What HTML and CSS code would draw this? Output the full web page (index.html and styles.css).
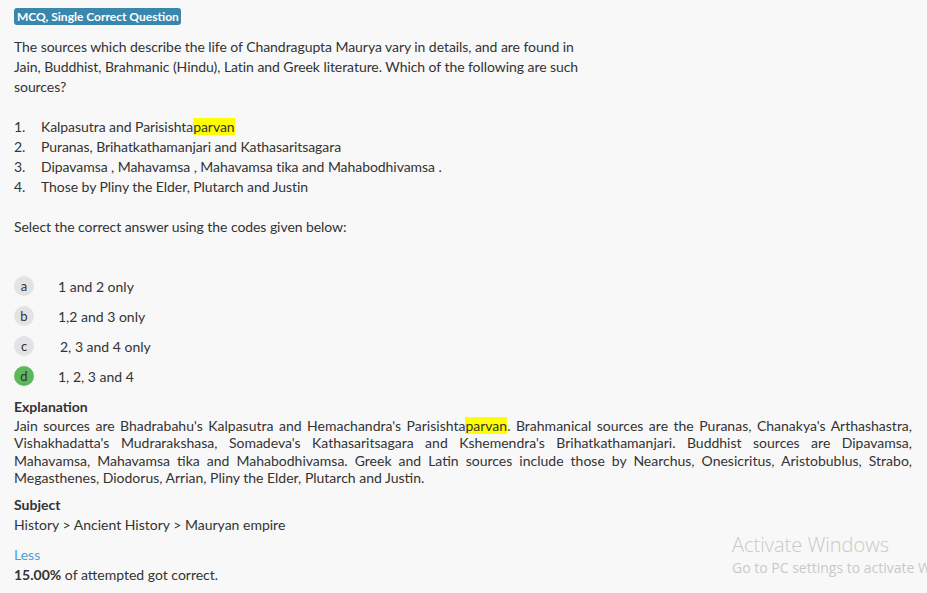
FILE: index.html
```html
<!DOCTYPE html>
<html>
<head>
<meta charset="utf-8">
<link rel="stylesheet" href="styles.css">
</head>
<body>
<div class="page">
  <div class="badge-row"><span class="badge">MCQ, Single Correct Question</span></div>
  <div class="question">
    <p class="q-text">The sources which describe the life of Chandragupta Maurya vary in details, and are found in<br>Jain, Buddhist, Brahmanic (Hindu), Latin and Greek literature. Which of the following are such<br>sources?</p>
    <ol class="q-list">
      <li><span class="num">1.</span><span>Kalpasutra and Parisishta<mark>parvan</mark></span></li>
      <li><span class="num">2.</span><span>Puranas, Brihatkathamanjari and Kathasaritsagara</span></li>
      <li><span class="num">3.</span><span>Dipavamsa , Mahavamsa , Mahavamsa tika and Mahabodhivamsa .</span></li>
      <li><span class="num">4.</span><span>Those by Pliny the Elder, Plutarch and Justin</span></li>
    </ol>
    <p class="q-select">Select the correct answer using the codes given below:</p>
  </div>
  <div class="options">
    <div class="opt"><span class="circle">a</span><span class="opt-text">1 and 2 only</span></div>
    <div class="opt"><span class="circle">b</span><span class="opt-text">1,2 and 3 only</span></div>
    <div class="opt"><span class="circle">c</span><span class="opt-text shift">2, 3 and 4 only</span></div>
    <div class="opt"><span class="circle correct">d</span><span class="opt-text">1, 2, 3 and 4</span></div>
  </div>
  <div class="explanation">
    <div class="label">Explanation</div>
    <p class="exp-text">Jain sources are Bhadrabahu's Kalpasutra and Hemachandra's Parisishta<mark>parvan</mark>. Brahmanical sources are the Puranas, Chanakya's Arthashastra, Vishakhadatta's Mudrarakshasa, Somadeva's Kathasaritsagara and Kshemendra's Brihatkathamanjari. Buddhist sources are Dipavamsa, Mahavamsa, Mahavamsa tika and Mahabodhivamsa. Greek and Latin sources include those by Nearchus, Onesicritus, Aristobublus, Strabo, Megasthenes, Diodorus, Arrian, Pliny the Elder, Plutarch and Justin.</p>
  </div>
  <div class="subject">
    <div class="label">Subject</div>
    <div class="crumbs">History &gt; Ancient History &gt; Mauryan empire</div>
  </div>
  <div class="stats">
    <a class="less">Less</a>
    <div class="pct"><b>15.00%</b> of attempted got correct.</div>
  </div>
</div>
<div class="watermark">
  <div class="wm-title">Activate Windows</div>
  <div class="wm-sub">Go to PC settings to activate Windows.</div>
</div>
</body>
</html>
```
FILE: styles.css
```css
html, body {
  margin: 0;
  padding: 0;
  background: #f8f8f8;
  overflow: hidden;
}
body {
  font-family: Lato, "Open Sans", sans-serif;
  color: #333;
  font-size: 14px;
  width: 927px;
  height: 593px;
  position: relative;
}
.page {
  padding: 8px 15px 0 14px;
}
.badge-row {
  height: 17px;
  display: flex;
}
.badge {
  background: #3a87ad;
  color: #fff;
  font-weight: bold;
  font-size: 12px;
  line-height: 17px;
  padding: 0 2px 0 3px;
  border-radius: 3px;
}
p { margin: 0; }
mark {
  background: #ffff00;
  color: #333;
}
.question {
  padding-top: 12px;
  line-height: 20px;
  letter-spacing: -0.06px;
}
.q-list {
  list-style: none;
  margin: 20px 0 0 0;
  padding: 0;
}
.q-list li {
  display: flex;
}
.q-list .num {
  width: 27px;
  flex: none;
}
.q-select {
  margin-top: 20px;
}
.options {
  padding-top: 39px;
  display: flex;
  flex-direction: column;
  gap: 10px;
}
.opt {
  display: flex;
  align-items: center;
  height: 20px;
}
.circle {
  width: 20px;
  height: 20px;
  border-radius: 50%;
  background: #e3e3e3;
  display: flex;
  align-items: center;
  justify-content: center;
  font-size: 13px;
  line-height: 20px;
  color: #333;
  flex: none;
}
.circle.correct {
  background: #5cb85c;
}
.opt-text {
  margin-left: 24px;
}
.opt-text.shift {
  margin-left: 26px;
}
.explanation {
  margin-top: 11px;
}
.label {
  font-weight: bold;
  line-height: 20px;
}
.exp-text {
  font-size: 14px;
  line-height: 17.3px;
  text-align: justify;
}
.subject {
  margin-top: 9px;
}
.crumbs {
  line-height: 20px;
}
.stats {
  margin-top: 10px;
  line-height: 20px;
}
.less {
  display: block;
  color: #4a9fdc;
}
.watermark {
  position: absolute;
  left: 732px;
  top: 533px;
  white-space: nowrap;
  color: #c9c9c9;
  font-family: "Open Sans", "Noto Sans", sans-serif;
}
.wm-title {
  font-size: 20px;
  line-height: 24px;
  font-weight: 300;
}
.wm-sub {
  font-size: 14px;
  line-height: 20px;
  margin-top: 1px;
}
```
